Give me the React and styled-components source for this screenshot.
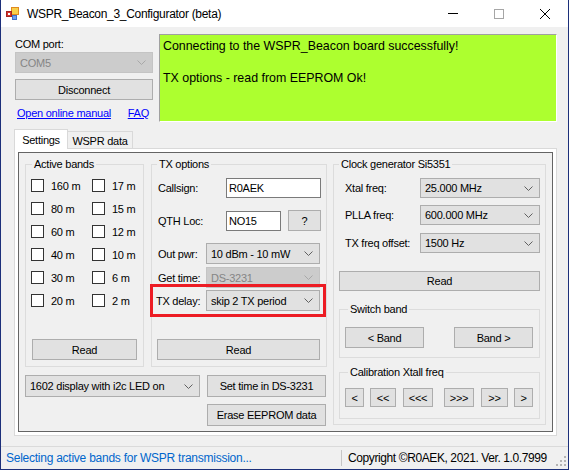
import React from 'react';
import styled, { createGlobalStyle } from 'styled-components';

const GlobalStyle = createGlobalStyle`
  html, body { margin: 0; padding: 0; background: #f0f0f0; }
  body {
    font-family: "Liberation Sans", Arial, sans-serif;
    font-size: 11px;
    color: #000;
    letter-spacing: -0.25px;
  }
  * { box-sizing: border-box; }
`;

const Window = styled.div`
  width: 569px;
  height: 470px;
  display: flex;
  flex-direction: column;
  background: #f0f0f0;
  border: 1px solid #1c2f7a;
  border-top: none;
  overflow: hidden;
`;

const TitleBar = styled.div`
  height: 27px;
  flex-shrink: 0;
  display: flex;
  align-items: center;
  padding-left: 5px;
  background: #fff;
`;

const TitleText = styled.div`
  margin-left: 8px;
  font-size: 12px;
  letter-spacing: -0.3px;
`;

const CaptionButtons = styled.div`
  margin-left: auto;
  display: flex;
  height: 100%;
`;

const CaptionButton = styled.div`
  width: 46px;
  height: 100%;
  display: flex;
  align-items: center;
  justify-content: center;
`;

const MinGlyph = styled.div`
  width: 10px;
  height: 1px;
  background: #000;
`;

const MaxGlyph = styled.div`
  width: 10px;
  height: 10px;
  border: 1px solid #a6a6a6;
`;

const Client = styled.div`
  flex: 1;
  display: flex;
  flex-direction: column;
`;

const TopSection = styled.div`
  display: flex;
  height: 88px;
  margin-top: 7px;
  padding-left: 14px;
`;

const ConnectColumn = styled.div`
  width: 138px;
  display: flex;
  flex-direction: column;
`;

const FieldLabel = styled.div`
  margin-top: 4px;
  line-height: 13px;
`;

const ComboBox = styled.div`
  width: ${(p) => p.$w}px;
  height: ${(p) => p.$h || 21}px;
  margin-top: ${(p) => p.$mt || 0}px;
  display: flex;
  align-items: center;
  justify-content: space-between;
  padding: 0 6px 0 4px;
  border: 1px solid ${(p) => (p.$disabled ? '#c4c4c4' : '#adadad')};
  background: ${(p) => (p.$disabled ? '#cccccc' : '#e1e1e1')};
  color: ${(p) => (p.$disabled ? '#858585' : '#000')};
  white-space: nowrap;
`;

const Button = styled.button`
  width: ${(p) => p.$w}px;
  height: ${(p) => p.$h || 21}px;
  margin: ${(p) => p.$mt || 0}px 0 0 ${(p) => p.$ml || 0}px;
  padding: 0;
  display: flex;
  align-items: center;
  justify-content: center;
  flex-shrink: 0;
  border: 1px solid #adadad;
  background: #e1e1e1;
  color: #000;
  font: inherit;
  letter-spacing: inherit;
  white-space: nowrap;
`;

const LinkRow = styled.div`
  margin-top: 7px;
  display: flex;
  justify-content: space-between;
  padding: 0 4px 0 2px;
  line-height: 13px;
`;

const Link = styled.a`
  color: #0000ff;
  text-decoration: underline;
`;

const Console = styled.div`
  width: 398px;
  height: 88px;
  margin-left: 6px;
  padding: 3px;
  background: #adff2f;
  border: 1px solid;
  border-color: #a0a0a0 #ffffff #ffffff #a0a0a0;
  font-size: 12.4px;
  line-height: 16px;
  letter-spacing: 0;
`;

const ConsoleLine = styled.div`
  height: 16px;
  white-space: nowrap;
`;

const Tabs = styled.div`
  margin-top: 7px;
  padding-left: 13px;
`;

const TabStrip = styled.div`
  height: 20px;
  display: flex;
  align-items: flex-end;
  position: relative;
  z-index: 1;
`;

const Tab = styled.div`
  width: ${(p) => (p.$active ? 54 : 66)}px;
  height: ${(p) => (p.$active ? 20 : 17)}px;
  margin-bottom: ${(p) => (p.$active ? 0 : 1)}px;
  margin-left: ${(p) => (p.$active ? 0 : -1)}px;
  display: flex;
  align-items: center;
  justify-content: center;
  border: 1px solid #d9d9d9;
  border-bottom: none;
  background: ${(p) => (p.$active ? '#ffffff' : '#f0f0f0')};
  position: relative;
  z-index: ${(p) => (p.$active ? 2 : 1)};
  padding-top: ${(p) => (p.$active ? 0 : 2)}px;
`;

const TabPage = styled.div`
  width: 543px;
  height: 288px;
  margin-top: -1px;
  padding: 3px;
  border: 1px solid #d9d9d9;
  background: #ffffff;
`;

const Panel = styled.div`
  width: 535px;
  height: 280px;
  display: flex;
  gap: 6px;
  padding: 5px 0 0 6px;
  border: 1px solid #646464;
  background: #f0f0f0;
`;

const LeftArea = styled.div`
  width: 302px;
  display: flex;
  flex-direction: column;
`;

const GroupRow = styled.div`
  display: flex;
  gap: 7px;
`;

const Group = styled.fieldset`
  width: ${(p) => p.$w}px;
  height: ${(p) => p.$h}px;
  min-width: 0;
  margin: ${(p) => p.$mt || 0}px 0 0 0;
  padding: 0;
  border: 1px solid #dcdcdc;
  flex-shrink: 0;
`;

const Legend = styled.legend`
  margin-left: ${(p) => p.$ml}px;
  padding: 0 2px;
  line-height: 13px;
  font-size: 11px;
`;

const GroupBody = styled.div`
  padding-left: ${(p) => p.$pl}px;
  display: flex;
  flex-direction: column;
`;

const CheckGrid = styled.div`
  margin-top: 3px;
  display: grid;
  grid-template-columns: 61px auto;
  grid-auto-rows: 23px;
`;

const Check = styled.label`
  display: flex;
  align-items: center;
  gap: 7px;
`;

const CheckBox = styled.span`
  width: 13px;
  height: 13px;
  border: 1px solid #333;
  background: #fff;
`;

const FormRow = styled.div`
  width: fit-content;
  display: flex;
  align-items: center;
  margin: ${(p) => p.$mt || 0}px 0 0 ${(p) => p.$ml || 0}px;
  ${(p) => p.$highlight && 'outline: 3px solid #ed1c24; outline-offset: 3px;'}
`;

const RowLabel = styled.span`
  width: ${(p) => p.$w}px;
  margin-left: ${(p) => p.$ml || 0}px;
  white-space: nowrap;
`;

const TextBox = styled.div`
  width: ${(p) => p.$w}px;
  height: 20px;
  display: flex;
  align-items: center;
  padding-left: 2px;
  border: 1px solid #7a7a7a;
  background: #fff;
`;

const ButtonRow = styled.div`
  display: flex;
  gap: ${(p) => p.$gap || 0}px;
  margin-top: ${(p) => p.$mt}px;
`;

const BottomGrid = styled.div`
  margin-top: 8px;
  display: grid;
  grid-template-columns: 175px 119px;
  grid-template-rows: 22px 22px;
  column-gap: 7px;
  row-gap: 7px;
`;

const StatusStrip = styled.div`
  margin-top: auto;
  height: 23px;
  display: flex;
  align-items: center;
  border-top: 1px solid #dadada;
  font-size: 12px;
`;

const StatusText = styled.div`
  flex: 1;
  padding-left: 5px;
  color: #0066cc;
  white-space: nowrap;
`;

const StatusRight = styled.div`
  width: 227px;
  height: 100%;
  display: flex;
  align-items: center;
`;

const Separator = styled.div`
  width: 1px;
  height: 16px;
  background: #c6c6c6;
`;

const Copyright = styled.div`
  padding-left: 6px;
  white-space: nowrap;
  letter-spacing: -0.4px;
`;

const Grip = styled.svg`
  align-self: flex-end;
  margin: 0 1px 2px auto;
`;

const Chevron = ({ disabled }) => (
  <svg width="9" height="5" viewBox="0 0 9 5">
    <polyline
      points="0.5,0.5 4.5,4.5 8.5,0.5"
      fill="none"
      stroke={disabled ? '#a8a8a8' : '#606060'}
      strokeWidth="1"
    />
  </svg>
);

const Combo = ({ value, w, h, mt, disabled }) => (
  <ComboBox $w={w} $h={h} $mt={mt} $disabled={disabled}>
    <span>{value}</span>
    <Chevron disabled={disabled} />
  </ComboBox>
);

const AppIcon = () => (
  <svg width="13" height="13" viewBox="0 0 13 13">
    <rect x="5.5" y="0.5" width="7" height="7" fill="#f8cf4a" stroke="#e08a1e" />
    <rect x="0.5" y="4.5" width="5" height="5" fill="#d8342c" stroke="#a5241e" />
    <rect x="2" y="6" width="2" height="2" fill="#fff" />
    <rect x="6.5" y="8.5" width="4" height="4" fill="#6fa0f0" stroke="#3c6fc8" />
  </svg>
);

const bands = ['160 m', '17 m', '80 m', '15 m', '60 m', '12 m', '40 m', '10 m', '30 m', '6 m', '20 m', '2 m'];

const calButtons = [
  { t: '<', w: 19, ml: 0 },
  { t: '<<', w: 26, ml: 6 },
  { t: '<<<', w: 30, ml: 7 },
  { t: '>>>', w: 30, ml: 11 },
  { t: '>>', w: 27, ml: 7 },
  { t: '>', w: 19, ml: 6 },
];

const App = () => {
  return (
    <>
      <GlobalStyle />
      <Window>
        <TitleBar>
          <AppIcon />
          <TitleText>WSPR_Beacon_3_Configurator (beta)</TitleText>
          <CaptionButtons>
            <CaptionButton>
              <MinGlyph />
            </CaptionButton>
            <CaptionButton>
              <MaxGlyph />
            </CaptionButton>
            <CaptionButton>
              <svg width="10" height="10" viewBox="0 0 10 10">
                <path d="M0 0 L10 10 M10 0 L0 10" stroke="#000" strokeWidth="1" />
              </svg>
            </CaptionButton>
          </CaptionButtons>
        </TitleBar>

        <Client>
          <TopSection>
            <ConnectColumn>
              <FieldLabel>COM port:</FieldLabel>
              <Combo value="COM5" w={138} mt={1} disabled />
              <Button $w={138} $mt={6}>Disconnect</Button>
              <LinkRow>
                <Link>Open online manual</Link>
                <Link>FAQ</Link>
              </LinkRow>
            </ConnectColumn>
            <Console>
              <ConsoleLine>Connecting to the WSPR_Beacon board successfully!</ConsoleLine>
              <ConsoleLine />
              <ConsoleLine>TX options - read from EEPROM Ok!</ConsoleLine>
            </Console>
          </TopSection>

          <Tabs>
            <TabStrip>
              <Tab $active>Settings</Tab>
              <Tab>WSPR data</Tab>
            </TabStrip>
            <TabPage>
              <Panel>
                <LeftArea>
                  <GroupRow>
                    <Group $w={119} $h={209}>
                      <Legend $ml={6}>Active bands</Legend>
                      <GroupBody $pl={5}>
                        <CheckGrid>
                          {bands.map((b) => (
                            <Check key={b}>
                              <CheckBox />
                              {b}
                            </Check>
                          ))}
                        </CheckGrid>
                        <Button $w={105} $mt={27} $ml={1}>Read</Button>
                      </GroupBody>
                    </Group>

                    <Group $w={176} $h={209}>
                      <Legend $ml={5}>TX options</Legend>
                      <GroupBody $pl={6}>
                        <FormRow $mt={7}>
                          <RowLabel $w={68}>Callsign:</RowLabel>
                          <TextBox $w={95}>R0AEK</TextBox>
                        </FormRow>
                        <FormRow $mt={12}>
                          <RowLabel $w={68}>QTH Loc:</RowLabel>
                          <TextBox $w={55}>NO15</TextBox>
                          <Button $w={33} $ml={7}>?</Button>
                        </FormRow>
                        <FormRow $mt={12}>
                          <RowLabel $w={48}>Out pwr:</RowLabel>
                          <Combo value="10 dBm - 10 mW" w={114} />
                        </FormRow>
                        <FormRow $mt={3}>
                          <RowLabel $w={48}>Get time:</RowLabel>
                          <Combo value="DS-3231" w={114} disabled />
                        </FormRow>
                        <FormRow $mt={2} $ml={-2} $highlight>
                          <RowLabel $w={50}>TX delay:</RowLabel>
                          <Combo value="skip 2 TX period" w={114} />
                        </FormRow>
                        <Button $w={163} $mt={28} $ml={-1}>Read</Button>
                      </GroupBody>
                    </Group>
                  </GroupRow>

                  <BottomGrid>
                    <Combo value="1602 display with i2c LED on" w={175} h={22} />
                    <Button $w={119} $h={22}>Set time in DS-3231</Button>
                    <span />
                    <Button $w={119} $h={22}>Erase EEPROM data</Button>
                  </BottomGrid>
                </LeftArea>

                <Group $w={213} $h={267}>
                  <Legend $ml={5}>Clock generator Si5351</Legend>
                  <GroupBody $pl={5}>
                    <FormRow $mt={7}>
                      <RowLabel $w={75} $ml={6}>Xtal freq:</RowLabel>
                      <Combo value="25.000 MHz" w={120} h={20} />
                    </FormRow>
                    <FormRow $mt={7}>
                      <RowLabel $w={75} $ml={6}>PLLA freq:</RowLabel>
                      <Combo value="600.000 MHz" w={120} h={20} />
                    </FormRow>
                    <FormRow $mt={8}>
                      <RowLabel $w={75} $ml={6}>TX freq offset:</RowLabel>
                      <Combo value="1500 Hz" w={120} h={20} />
                    </FormRow>
                    <Button $w={201} $h={20} $mt={18}>Read</Button>

                    <Group $w={201} $h={55} $mt={12}>
                      <Legend $ml={8}>Switch band</Legend>
                      <GroupBody $pl={5}>
                        <ButtonRow $mt={11} $gap={30}>
                          <Button $w={79}>&lt; Band</Button>
                          <Button $w={79}>Band &gt;</Button>
                        </ButtonRow>
                      </GroupBody>
                    </Group>

                    <Group $w={201} $h={53} $mt={8}>
                      <Legend $ml={8}>Calibration Xtall freq</Legend>
                      <GroupBody $pl={5}>
                        <ButtonRow $mt={9}>
                          {calButtons.map((b) => (
                            <Button key={b.t} $w={b.w} $h={19} $ml={b.ml}>
                              {b.t}
                            </Button>
                          ))}
                        </ButtonRow>
                      </GroupBody>
                    </Group>
                  </GroupBody>
                </Group>
              </Panel>
            </TabPage>
          </Tabs>

          <StatusStrip>
            <StatusText>Selecting active bands for WSPR transmission...</StatusText>
            <StatusRight>
              <Separator />
              <Copyright>Copyright ©R0AEK, 2021. Ver. 1.0.7999</Copyright>
              <Grip width="11" height="11" viewBox="0 0 11 11">
                {[[8, 0], [4, 4], [8, 4], [0, 8], [4, 8], [8, 8]].map(([x, y]) => (
                  <rect key={`${x}-${y}`} x={x} y={y} width="2" height="2" fill="#b4b4b4" />
                ))}
              </Grip>
            </StatusRight>
          </StatusStrip>
        </Client>
      </Window>
    </>
  );
};

export default App;
